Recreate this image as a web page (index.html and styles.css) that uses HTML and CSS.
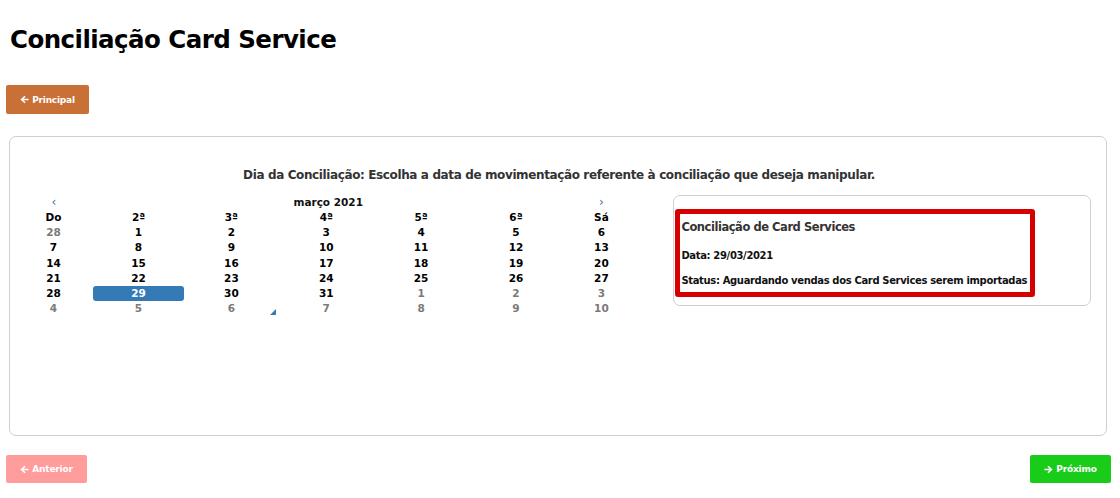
FILE: index.html
```html
<!DOCTYPE html>
<html lang="pt-BR">
<head>
<meta charset="utf-8">
<title>Conciliação Card Service</title>
<link rel="stylesheet" href="styles.css">
</head>
<body>
<h1 class="title">Conciliação Card Service</h1>
<button class="btn btn-main"><svg class="arr" viewBox="0 0 10 10" width="9" height="9"><path d="M0.5 5 L5 0.8 L6.2 2 L3.8 4.1 L9.5 4.1 L9.5 5.9 L3.8 5.9 L6.2 8 L5 9.2 Z" fill="#fff"/></svg>Principal</button>
<section class="card">
  <h2 class="card-heading">Dia da Conciliação: Escolha a data de movimentação referente à conciliação que deseja manipular.</h2>
  <div class="card-body">
    <div class="calendar">
      <div class="cal-nav">
        <span class="nav prev">&lsaquo;</span>
        <span class="month">março 2021</span>
        <span class="nav next">&rsaquo;</span>
      </div>
      <div class="cal-grid">
        <span class="dow">Do</span><span class="dow">2ª</span><span class="dow">3ª</span><span class="dow">4ª</span><span class="dow">5ª</span><span class="dow">6ª</span><span class="dow">Sá</span>
        <span class="day old">28</span><span class="day">1</span><span class="day">2</span><span class="day">3</span><span class="day">4</span><span class="day">5</span><span class="day">6</span>
        <span class="day">7</span><span class="day">8</span><span class="day">9</span><span class="day">10</span><span class="day">11</span><span class="day">12</span><span class="day">13</span>
        <span class="day">14</span><span class="day">15</span><span class="day">16</span><span class="day">17</span><span class="day">18</span><span class="day">19</span><span class="day">20</span>
        <span class="day">21</span><span class="day">22</span><span class="day">23</span><span class="day">24</span><span class="day">25</span><span class="day">26</span><span class="day">27</span>
        <span class="day">28</span><span class="day active">29</span><span class="day">30</span><span class="day">31</span><span class="day old">1</span><span class="day old">2</span><span class="day old">3</span>
        <span class="day old">4</span><span class="day old">5</span><span class="day old today">6</span><span class="day old">7</span><span class="day old">8</span><span class="day old">9</span><span class="day old">10</span>
      </div>
    </div>
    <div class="info">
      <div class="info-box">
        <h3 class="info-title">Conciliação de Card Services</h3>
        <p class="info-line first">Data: 29/03/2021</p>
        <p class="info-line">Status: Aguardando vendas dos Card Services serem importadas</p>
      </div>
    </div>
  </div>
</section>
<div class="footer">
  <button class="btn btn-prev"><svg class="arr" viewBox="0 0 10 10" width="9" height="9"><path d="M0.5 5 L5 0.8 L6.2 2 L3.8 4.1 L9.5 4.1 L9.5 5.9 L3.8 5.9 L6.2 8 L5 9.2 Z" fill="#fff"/></svg>Anterior</button>
  <button class="btn btn-next"><svg class="arr" viewBox="0 0 10 10" width="9" height="9"><path d="M9.5 5 L5 0.8 L3.8 2 L6.2 4.1 L0.5 4.1 L0.5 5.9 L6.2 5.9 L3.8 8 L5 9.2 Z" fill="#fff"/></svg>Próximo</button>
</div>
</body>
</html>
```
FILE: styles.css
```css
* { box-sizing: border-box; }
body {
  margin: 0;
  font-family: "DejaVu Sans", "Open Sans", sans-serif;
  color: #000;
  background: #fff;
  width: 1120px;
  height: 498px;
  overflow: hidden;
}
.title {
  margin: 24px 0 0 10px;
  font-size: 24.5px;
  font-weight: bold;
  line-height: 32px;
  letter-spacing: -0.55px;
}
.btn {
  display: inline-flex;
  align-items: center;
  justify-content: center;
  gap: 3px;
  border: none;
  border-radius: 2px;
  color: #fff;
  font-family: "DejaVu Sans", sans-serif;
  font-weight: bold;
  font-size: 9px;
  letter-spacing: -0.2px;
  height: 29px;
  padding: 0;
  cursor: pointer;
}
.arr { display: block; }
.btn-main {
  display: flex;
  margin: 29px 0 0 6px;
  width: 83px;
  background: #c97036;
}
.card {
  margin: 22px 13px 0 9px;
  height: 300px;
  border: 1px solid #cfcfcf;
  border-radius: 7px;
  padding: 28px 15px 0 7px;
}
.card-heading {
  margin: 0 -15px 0 -5px;
  text-align: center;
  font-size: 12px;
  font-weight: 600;
  color: #333;
  line-height: 20px;
  letter-spacing: -0.38px;
}
.card-body {
  display: flex;
  margin-top: 10px;
  align-items: flex-start;
}
.calendar {
  width: 623px;
  font-size: 10.5px;
  font-weight: bold;
  line-height: 15.15px;
}
.cal-nav {
  display: grid;
  grid-template-columns: 74px 1fr 76px;
  text-align: center;
  font-weight: 600;
  color: #111;
}
.month { padding-left: 2px; }
.nav { color: #3a6fb0; font-weight: normal; font-size: 12px; }
.cal-grid {
  display: grid;
  grid-template-columns: 76px 91px repeat(4, 1fr) 76px;
  text-align: center;
}
.dow:first-child, .day:nth-child(7n+1) { padding-right: 3px; }
.day { position: relative; }
.day.old { color: #7a7a7a; }
.day.active {
  background: #337ab7;
  color: #fff;
  border-radius: 3px;
}
.day.today::after {
  content: "";
  position: absolute;
  right: 3px;
  bottom: 1px;
  border-style: solid;
  border-width: 0 0 6px 6px;
  border-color: transparent transparent #337ab7 transparent;
}
.info {
  margin-left: 34px;
  margin-top: 0;
  width: 418px;
  height: 111px;
  border: 1px solid #cfcfcf;
  border-radius: 7px;
  padding: 13px 0 0 1px;
}
.info-box {
  width: 360px;
  height: 88px;
  border: 5px solid #d60000;
  border-radius: 3px;
  padding: 5px 0 0 1px;
}
.info-title {
  margin: 0;
  font-size: 11.5px;
  font-weight: 600;
  color: #333;
  line-height: 16px;
  letter-spacing: -0.45px;
}
.info-line {
  margin: 13px 0 0;
  font-size: 10px;
  font-weight: 600;
  color: #111;
  line-height: 12px;
  letter-spacing: -0.35px;
  white-space: nowrap;
}
.info-line.first { margin-top: 15px; }
.footer {
  display: flex;
  justify-content: space-between;
  margin: 19px 9px 0 6px;
}
.btn-prev { width: 81px; height: 28px; background: #ff9c9c; }
.btn-next { width: 81px; height: 28px; background: #19cc19; }
```
